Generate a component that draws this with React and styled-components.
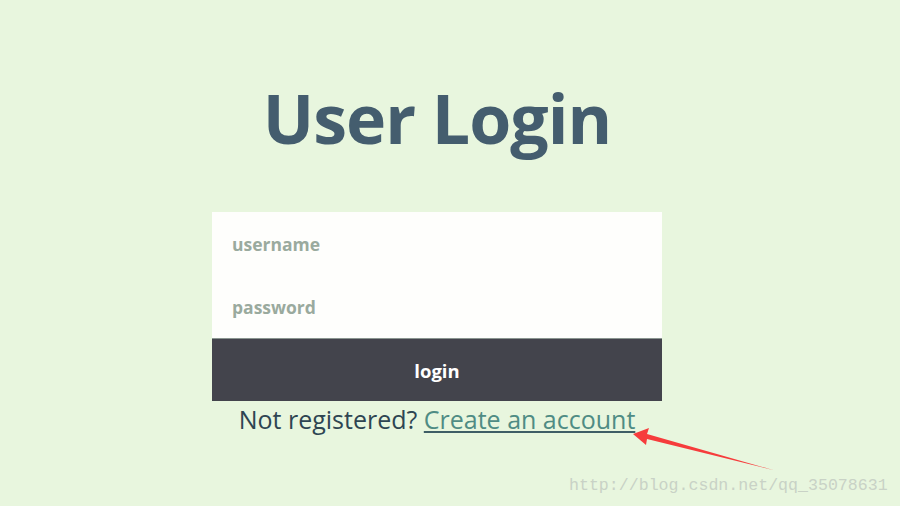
import styled, { createGlobalStyle } from 'styled-components';

const GlobalStyle = createGlobalStyle`
    html, body {
        margin: 0;
        padding: 0;
        background: #e8f6de;
        font-family: "Open Sans", "Noto Sans", sans-serif;
    }
`;

const Page = styled.div`
    position: relative;
    box-sizing: border-box;
    width: 900px;
    height: 506px;
    padding-right: 26px;
    overflow: hidden;
    display: flex;
    flex-direction: column;
    align-items: center;
`;

const Title = styled.h1`
    margin: 78px 0 0 0;
    font-size: 68px;
    line-height: 80px;
    font-weight: 700;
    color: #445d6e;
    letter-spacing: -1px;
`;

const Form = styled.form`
    margin-top: 54px;
    width: 450px;
    background: #fefefc;
    display: flex;
    flex-direction: column;
`;

const Input = styled.input`
    box-sizing: border-box;
    height: 63px;
    border: none;
    outline: none;
    background: transparent;
    padding: 0 20px;
    font-family: inherit;
    font-size: 17.5px;
    font-weight: 700;
    color: #555;

    &::placeholder {
        color: #9aaa9e;
    }
`;

const Button = styled.button`
    height: 63px;
    border: none;
    border-top: 1px solid #8a9590;
    background: #43444c;
    color: #ffffff;
    font-family: inherit;
    font-size: 18.5px;
    font-weight: 700;
    cursor: pointer;
`;

const Message = styled.p`
    margin: 1px 0 0 0;
    font-size: 25px;
    line-height: 34px;
    color: #2e4552;
`;

const Link = styled.a`
    color: #4f8c84;
    text-decoration: underline;
    text-decoration-color: #3f5e66;
`;

const Arrow = styled.svg`
    position: absolute;
    left: 630px;
    top: 428px;
`;

const Watermark = styled.span`
    position: absolute;
    left: 569px;
    top: 476px;
    font-family: "Liberation Mono", monospace;
    font-size: 16.6px;
    color: #c9d2c6;
`;

const App = () => {
    return (
        <Page>
            <GlobalStyle />
            <Title>User Login</Title>
            <Form onSubmit={(e) => e.preventDefault()}>
                <Input type="text" placeholder="username" />
                <Input type="password" placeholder="password" />
                <Button type="submit">login</Button>
            </Form>
            <Message>
                Not registered? <Link href="#">Create an account</Link>
            </Message>
            <Arrow width="150" height="50" viewBox="0 0 150 50">
                <path d="M3 6 L19 0 L17 6 L143 42 L17 11 L16 17 Z" fill="#f63c3c" />
            </Arrow>
            <Watermark>http://blog.csdn.net/qq_35078631</Watermark>
        </Page>
    );
};

export default App;
